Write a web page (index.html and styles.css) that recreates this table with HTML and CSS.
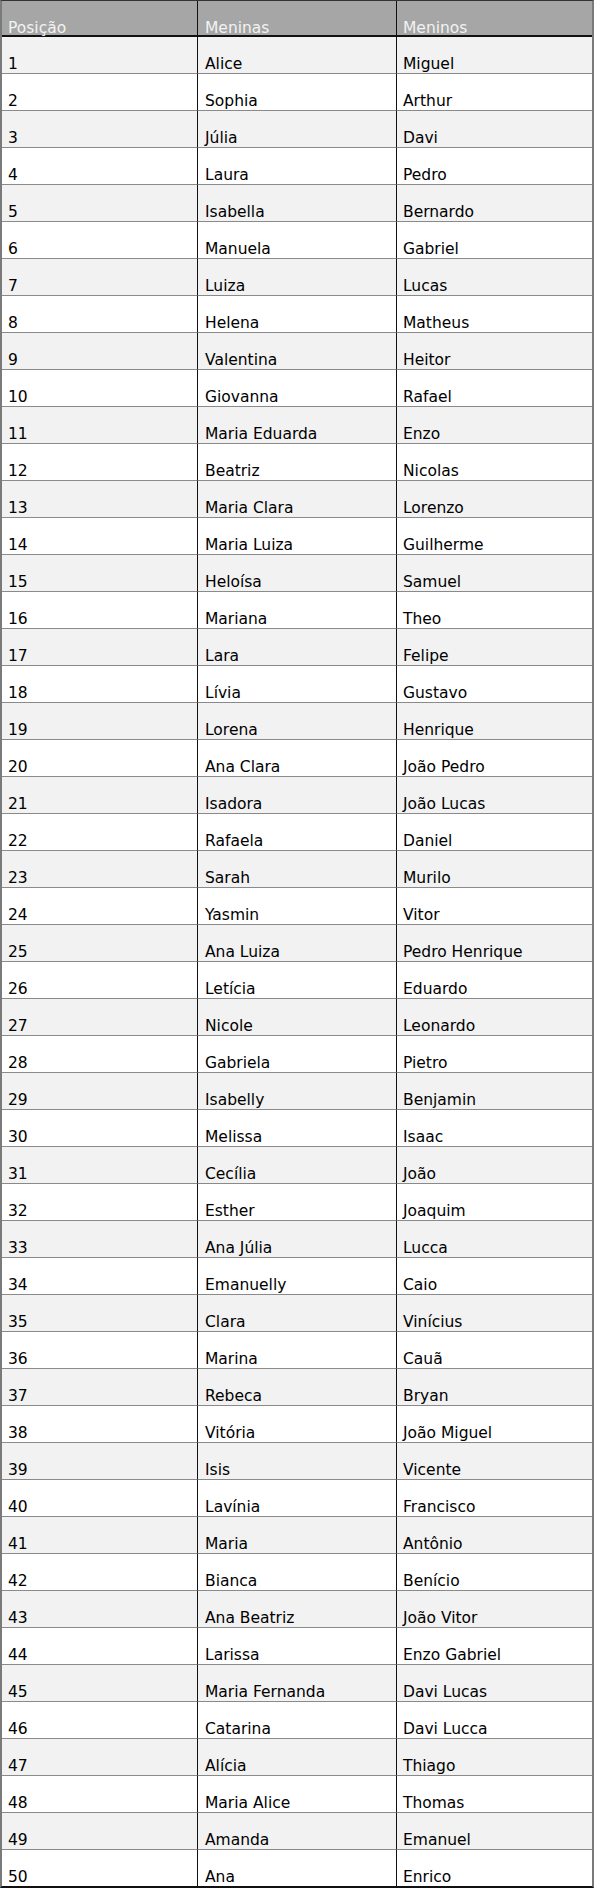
FILE: index.html
```html
<!DOCTYPE html>
<html lang="pt-BR">
<head>
<meta charset="utf-8">
<title>Nomes</title>
<link rel="stylesheet" href="styles.css">
</head>
<body>
<table class="names">
<thead>
<tr><th class="c1">Posição</th><th class="c2">Meninas</th><th class="c3">Meninos</th></tr>
</thead>
<tbody>
<tr><td>1</td><td>Alice</td><td>Miguel</td></tr>
<tr><td>2</td><td>Sophia</td><td>Arthur</td></tr>
<tr><td>3</td><td>Júlia</td><td>Davi</td></tr>
<tr><td>4</td><td>Laura</td><td>Pedro</td></tr>
<tr><td>5</td><td>Isabella</td><td>Bernardo</td></tr>
<tr><td>6</td><td>Manuela</td><td>Gabriel</td></tr>
<tr><td>7</td><td>Luiza</td><td>Lucas</td></tr>
<tr><td>8</td><td>Helena</td><td>Matheus</td></tr>
<tr><td>9</td><td>Valentina</td><td>Heitor</td></tr>
<tr><td>10</td><td>Giovanna</td><td>Rafael</td></tr>
<tr><td>11</td><td>Maria Eduarda</td><td>Enzo</td></tr>
<tr><td>12</td><td>Beatriz</td><td>Nicolas</td></tr>
<tr><td>13</td><td>Maria Clara</td><td>Lorenzo</td></tr>
<tr><td>14</td><td>Maria Luiza</td><td>Guilherme</td></tr>
<tr><td>15</td><td>Heloísa</td><td>Samuel</td></tr>
<tr><td>16</td><td>Mariana</td><td>Theo</td></tr>
<tr><td>17</td><td>Lara</td><td>Felipe</td></tr>
<tr><td>18</td><td>Lívia</td><td>Gustavo</td></tr>
<tr><td>19</td><td>Lorena</td><td>Henrique</td></tr>
<tr><td>20</td><td>Ana Clara</td><td>João Pedro</td></tr>
<tr><td>21</td><td>Isadora</td><td>João Lucas</td></tr>
<tr><td>22</td><td>Rafaela</td><td>Daniel</td></tr>
<tr><td>23</td><td>Sarah</td><td>Murilo</td></tr>
<tr><td>24</td><td>Yasmin</td><td>Vitor</td></tr>
<tr><td>25</td><td>Ana Luiza</td><td>Pedro Henrique</td></tr>
<tr><td>26</td><td>Letícia</td><td>Eduardo</td></tr>
<tr><td>27</td><td>Nicole</td><td>Leonardo</td></tr>
<tr><td>28</td><td>Gabriela</td><td>Pietro</td></tr>
<tr><td>29</td><td>Isabelly</td><td>Benjamin</td></tr>
<tr><td>30</td><td>Melissa</td><td>Isaac</td></tr>
<tr><td>31</td><td>Cecília</td><td>João</td></tr>
<tr><td>32</td><td>Esther</td><td>Joaquim</td></tr>
<tr><td>33</td><td>Ana Júlia</td><td>Lucca</td></tr>
<tr><td>34</td><td>Emanuelly</td><td>Caio</td></tr>
<tr><td>35</td><td>Clara</td><td>Vinícius</td></tr>
<tr><td>36</td><td>Marina</td><td>Cauã</td></tr>
<tr><td>37</td><td>Rebeca</td><td>Bryan</td></tr>
<tr><td>38</td><td>Vitória</td><td>João Miguel</td></tr>
<tr><td>39</td><td>Isis</td><td>Vicente</td></tr>
<tr><td>40</td><td>Lavínia</td><td>Francisco</td></tr>
<tr><td>41</td><td>Maria</td><td>Antônio</td></tr>
<tr><td>42</td><td>Bianca</td><td>Benício</td></tr>
<tr><td>43</td><td>Ana Beatriz</td><td>João Vitor</td></tr>
<tr><td>44</td><td>Larissa</td><td>Enzo Gabriel</td></tr>
<tr><td>45</td><td>Maria Fernanda</td><td>Davi Lucas</td></tr>
<tr><td>46</td><td>Catarina</td><td>Davi Lucca</td></tr>
<tr><td>47</td><td>Alícia</td><td>Thiago</td></tr>
<tr><td>48</td><td>Maria Alice</td><td>Thomas</td></tr>
<tr><td>49</td><td>Amanda</td><td>Emanuel</td></tr>
<tr><td>50</td><td>Ana</td><td>Enrico</td></tr>
</tbody>
</table>
</body>
</html>
```
FILE: styles.css
```css
html, body {
  margin: 0;
  padding: 0;
  background: #ffffff;
}

.names {
  width: 594px;
  table-layout: fixed;
  border-collapse: separate;
  border-spacing: 0;
  border-top: 1px solid #333333;
  border-left: 2px solid #7a7a7a;
  border-right: 2px solid #7a7a7a;
  border-bottom: 2px solid #111111;
  font-family: "DejaVu Sans", Verdana, sans-serif;
  font-size: 15.5px;
  line-height: 18px;
  color: #000000;
}

.names th,
.names td {
  box-sizing: border-box;
  padding: 0 0 0 6px;
  vertical-align: bottom;
  text-align: left;
  font-weight: normal;
  white-space: nowrap;
  overflow: hidden;
}

.names th {
  height: 36px;
  line-height: 13px;
  background: #a6a6a6;
  color: #f2f2f2;
  border-bottom: 2px solid #111111;
  overflow: visible;
}

.names td {
  height: 37px;
  border-bottom: 1px solid #8a8a8a;
}

.names tbody tr:last-child td {
  border-bottom: none;
  height: 36px;
}

.names th:not(:last-child),
.names td:not(:last-child) {
  border-right: 1px solid #111111;
}

.names .c1 { width: 196px; }
.names .c2 { width: 199px; }
.names .c3 { width: 195px; }

.names td:nth-child(2),
.names th:nth-child(2) {
  padding-left: 7px;
}

.names tbody tr:nth-child(odd) td {
  background: #f2f2f2;
}

.names tbody tr:nth-child(even) td {
  background: #ffffff;
}
```
